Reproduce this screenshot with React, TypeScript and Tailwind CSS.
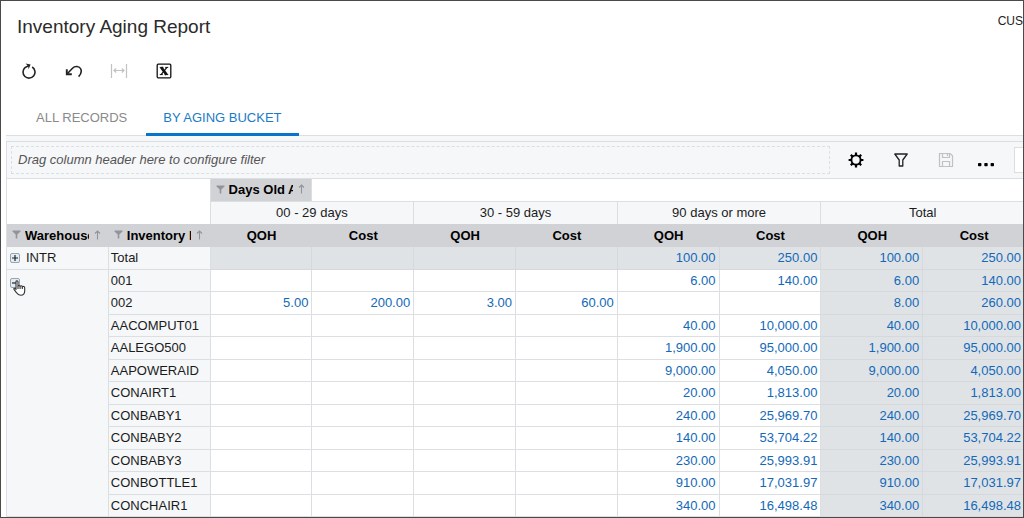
import React from "react";

type Row = { id: string; values: string[] };

const ROWS: Row[] = [
  { id: "Total", values: ["", "", "", "", "100.00", "250.00", "100.00", "250.00"] },
  { id: "001", values: ["", "", "", "", "6.00", "140.00", "6.00", "140.00"] },
  { id: "002", values: ["5.00", "200.00", "3.00", "60.00", "", "", "8.00", "260.00"] },
  { id: "AACOMPUT01", values: ["", "", "", "", "40.00", "10,000.00", "40.00", "10,000.00"] },
  { id: "AALEGO500", values: ["", "", "", "", "1,900.00", "95,000.00", "1,900.00", "95,000.00"] },
  { id: "AAPOWERAID", values: ["", "", "", "", "9,000.00", "4,050.00", "9,000.00", "4,050.00"] },
  { id: "CONAIRT1", values: ["", "", "", "", "20.00", "1,813.00", "20.00", "1,813.00"] },
  { id: "CONBABY1", values: ["", "", "", "", "240.00", "25,969.70", "240.00", "25,969.70"] },
  { id: "CONBABY2", values: ["", "", "", "", "140.00", "53,704.22", "140.00", "53,704.22"] },
  { id: "CONBABY3", values: ["", "", "", "", "230.00", "25,993.91", "230.00", "25,993.91"] },
  { id: "CONBOTTLE1", values: ["", "", "", "", "910.00", "17,031.97", "910.00", "17,031.97"] },
  { id: "CONCHAIR1", values: ["", "", "", "", "340.00", "16,498.48", "340.00", "16,498.48"] },
];

const BUCKETS = ["00 - 29 days", "30 - 59 days", "90 days or more", "Total"];

const RefreshIcon = () => (
  <svg width="16" height="16" viewBox="0 0 16 16" fill="none" stroke="#222" strokeWidth="1.6">
    <path d="M11.2 4A6 6 0 1 1 4 4.6L7.6 2.8" />
    <path d="M4.6 .4L9.6 1.6L7.6 6.2L7.2 3.2Z" fill="#222" stroke="none" />
  </svg>
);

const UndoIcon = () => (
  <svg width="18" height="16" viewBox="0 0 18 16" fill="none" stroke="#222" strokeWidth="1.6">
    <path d="M2.5 10.5L7.5 5.2C10 2.6 14.4 3 15.8 6C16.8 8.6 15.9 11.4 13.6 13.6" />
    <path d="M1.8 6.2V11.2H6.8" strokeWidth="1.9" />
  </svg>
);

const FitIcon = () => (
  <svg width="18" height="16" viewBox="0 0 18 16" fill="none" stroke="#c2c2c2" strokeWidth="1.2">
    <path d="M1.5 1V15M16.5 1V15M4 7.5H14" />
    <path d="M6.2 5.5L4 7.5L6.2 9.5M11.8 5.5L14 7.5L11.8 9.5" />
  </svg>
);

const ExcelIcon = () => (
  <svg width="16" height="16" viewBox="0 0 16 16" fill="none" stroke="#111">
    <rect x="1.2" y="1.2" width="13.6" height="13.6" rx="1" strokeWidth="1.3" />
    <path d="M5.2 4.4L10.6 11.6" strokeWidth="2.6" />
    <path d="M10.9 4.4L5.1 11.6" strokeWidth="1.2" />
    <path d="M3.8 4.4H7.4M9.2 4.4H12.2M3.8 11.6H6.8M8.6 11.6H12.2" strokeWidth="1" />
  </svg>
);

const GearIcon = () => (
  <svg width="16" height="16" viewBox="0 0 16 16" fill="none" stroke="#000">
    <circle cx="8" cy="8" r="4.6" strokeWidth="1.9" />
    <path
      d="M8 .6V3M8 13V15.4M.6 8H3M13 8H15.4M2.8 2.8L4.6 4.6M11.4 11.4L13.2 13.2M13.2 2.8L11.4 4.6M4.6 11.4L2.8 13.2"
      strokeWidth="2.2"
    />
  </svg>
);

const FunnelIcon = () => (
  <svg width="16" height="16" viewBox="0 0 16 16" fill="none" stroke="#222" strokeWidth="1.3">
    <path d="M1.8 2H14.2L9.8 8V14H6.2V8Z" strokeLinejoin="round" />
  </svg>
);

const SaveIcon = () => (
  <svg width="16" height="16" viewBox="0 0 16 16" fill="none" stroke="#bfc1c3" strokeWidth="1.2">
    <path d="M1.5 1.5H12.2L14.5 3.8V14.5H1.5Z" />
    <path d="M4.5 1.5V5.5H11.5V1.5M9.5 2V4M4.5 14.5V9.5H11.5V14.5" />
  </svg>
);

const DotsIcon = () => (
  <svg width="18" height="16" viewBox="0 0 18 16" fill="#000">
    <rect x="1" y="11" width="3.4" height="3.2" rx=".8" />
    <rect x="7.3" y="11" width="3.4" height="3.2" rx=".8" />
    <rect x="13.6" y="11" width="3.4" height="3.2" rx=".8" />
  </svg>
);

const HandCursor = () => (
  <svg
    className="absolute left-1.5 top-2.5 z-10"
    width="13"
    height="16"
    viewBox="0 0 13 16"
    fill="#fff"
    stroke="#333"
    strokeWidth="1.1"
    strokeLinejoin="round"
  >
    <path d="M3 9.5V1.7C3 .4 5 .4 5 1.7V6.2C5 5.2 7 5.2 7.1 6.4C7.4 5.4 9.2 5.6 9.3 6.9C9.7 6.1 11.7 6.3 11.7 7.7V11C11.7 13.8 10.2 15.2 7.7 15.2C5.4 15.2 4.5 14.3 3.6 12.8L1 9.4C.3 8.2 1.8 7.5 3 9.5Z" />
    <path d="M5 6.2V9M7.1 6.4V9M9.3 6.9V9" fill="none" />
  </svg>
);

type IconButtonProps = {
  label: string;
  disabled?: boolean;
  narrow?: boolean;
  children: React.ReactNode;
};

const IconButton: React.FC<IconButtonProps> = ({ label, disabled, narrow, children }) => (
  <button
    type="button"
    aria-label={label}
    disabled={disabled}
    className={`flex h-8 shrink-0 items-center justify-center ${narrow ? "w-9" : "w-[45px]"}`}
  >
    {children}
  </button>
);

const ExpandButton: React.FC<{ label: string; open?: boolean }> = ({ label, open = false }) => (
  <button type="button" aria-label={label} aria-expanded={open} className="block shrink-0">
    <svg width="10" height="10" viewBox="0 0 10 10" fill="none">
      <rect x=".5" y=".5" width="9" height="9" rx="1.5" fill="#e6ecf1" stroke="#97a5b1" />
      <path d={open ? "M2 5H8" : "M2 5H8M5 2V8"} stroke="#1c2430" strokeWidth="1.2" />
    </svg>
  </button>
);

const FieldHeader: React.FC<{ title: string }> = ({ title }) => (
  <div className="flex items-center pl-[5px]">
    <svg className="mb-0.5 shrink-0" width="9" height="9" viewBox="0 0 9 9" fill="#929499">
      <path d="M.5 .5H8.5V1.5L5.3 4.4V8.5H3.7V4.4L.5 1.5Z" />
    </svg>
    <span className="ml-1 w-16 shrink-0 overflow-hidden whitespace-nowrap text-left">{title}</span>
    <svg
      className="mb-0.5 ml-[5px] shrink-0"
      width="7"
      height="10"
      viewBox="0 0 7 10"
      fill="none"
      stroke="#929499"
    >
      <path d="M3.5 9.5V1M1 3.5L3.5 1L6 3.5" strokeWidth="1.1" />
    </svg>
  </div>
);

const cell = "overflow-hidden border-b border-r p-0 whitespace-nowrap";

const PivotTable = () => (
  <table className="w-full table-fixed border-separate border-spacing-0 border-l border-[#dcdfe2] text-[13px] leading-5 text-[#1b1b1b]">
    <thead>
      <tr className="h-[23px]">
        <td colSpan={2} rowSpan={2} className="border-r border-[#dcdfe2] p-0" />
        <th scope="col" className={`${cell} border-[#dcdfe2] bg-[#d1d2d6] text-black`}>
          <FieldHeader title="Days Old Aging" />
        </th>
        <td colSpan={7} className="border-b border-[#dcdfe2] p-0" />
      </tr>
      <tr className="h-[22px]">
        {BUCKETS.map((bucket) => (
          <th
            key={bucket}
            colSpan={2}
            scope="colgroup"
            className="border-r border-[#dcdfe2] bg-[#f5f7f9] p-0 text-center font-normal"
          >
            {bucket}
          </th>
        ))}
      </tr>
      <tr className="h-[23px] bg-[#d1d2d6] text-black">
        <th scope="col" className="p-0">
          <FieldHeader title="Warehouse" />
        </th>
        <th scope="col" className="p-0">
          <FieldHeader title="Inventory ID" />
        </th>
        {BUCKETS.map((bucket) => (
          <React.Fragment key={bucket}>
            <th scope="col" className="p-0 text-center">QOH</th>
            <th scope="col" className="p-0 text-center">Cost</th>
          </React.Fragment>
        ))}
      </tr>
    </thead>
    <tbody>
      {ROWS.map((row, i) => (
        <tr key={row.id} className="odd:h-[23px] even:h-[22px]">
          {i === 0 && (
            <td className={`${cell} border-[#dcdfe2] bg-[#f5f7f9]`}>
              <div className="flex items-center gap-1.5 pl-[3px]">
                <ExpandButton label="Expand INTR" />
                INTR
              </div>
            </td>
          )}
          {i === 1 && (
            <td
              rowSpan={ROWS.length - 1}
              className="border-b border-r border-[#dcdfe2] bg-[#f5f7f9] p-0 align-top"
            >
              <div className="relative pl-[3px] pt-2">
                <ExpandButton label="Collapse warehouse" open />
                <HandCursor />
              </div>
            </td>
          )}
          <th
            scope="row"
            className={`${cell} border-[#dcdfe2] bg-[#f5f7f9] pl-0.5 text-left font-normal`}
          >
            {row.id}
          </th>
          {row.values.map((value, col) => (
            <td
              key={col}
              className={`${cell} pr-[3px] text-right text-[#1269b8] ${
                i === 0 || col > 5 ? "border-[#d5d9dd] bg-[#dfe3e6]" : "border-[#dcdfe2] bg-white"
              }`}
            >
              {value}
            </td>
          ))}
        </tr>
      ))}
    </tbody>
  </table>
);

const App: React.FC = () => {
  return (
    <div className="h-screen overflow-hidden border border-[#4a4a4a] bg-white pl-[5px] font-['Liberation_Sans',Arial,sans-serif]">
      <header className="flex h-[50px] justify-between pl-[11px]">
        <h1 className="pt-3 text-[19px] leading-7 text-[#2b2b2b]">Inventory Aging Report</h1>
        <span className="pt-2.5 text-xs leading-5 text-[#222]">CUS</span>
      </header>

      <div className="flex h-10 items-center">
        <IconButton label="Refresh"><RefreshIcon /></IconButton>
        <IconButton label="Undo"><UndoIcon /></IconButton>
        <IconButton label="Fit columns" disabled><FitIcon /></IconButton>
        <IconButton label="Export to Excel"><ExcelIcon /></IconButton>
      </div>

      <nav className="flex h-[45px] gap-0.5 border-b border-[#dcdfe2] pl-[13px] text-[13px] leading-5" role="tablist">
        <button
          type="button"
          role="tab"
          aria-selected="false"
          className="-mb-px border-b-3 border-transparent px-[17px] pt-3 text-[#8a8a8a]"
        >
          ALL RECORDS
        </button>
        <button
          type="button"
          role="tab"
          aria-selected="true"
          className="-mb-px border-b-3 border-[#0a74cb] px-[17px] pt-3 text-[#1a7bc6]"
        >
          BY AGING BUCKET
        </button>
      </nav>

      <div className="bg-[#f5f7f9] pt-[5px]">
        <div className="flex h-[38px] items-center border-y border-l border-[#dcdfe2] pl-1">
          <div className="flex h-7 flex-1 items-center border border-dashed border-[#dcdfe2] pl-1.5 text-[13px] italic text-[#555]">
            Drag column header here to configure filter
          </div>
          <div className="flex pl-[3px]">
            <IconButton label="Settings"><GearIcon /></IconButton>
            <IconButton label="Filter"><FunnelIcon /></IconButton>
            <IconButton label="Save" disabled><SaveIcon /></IconButton>
            <IconButton label="More" narrow><DotsIcon /></IconButton>
          </div>
          <input
            type="text"
            aria-label="Search"
            className="ml-2.5 h-[26px] w-[9px] border-y border-l border-[#dcdfe2] bg-white"
          />
        </div>
      </div>

      <div className="-mr-0.5">
        <PivotTable />
      </div>
    </div>
  );
};

export default App;
